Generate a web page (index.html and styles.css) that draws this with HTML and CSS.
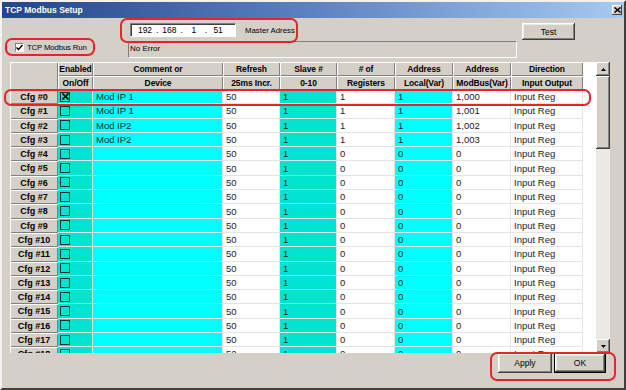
FILE: index.html
```html
<!DOCTYPE html>
<html>
<head>
  <title>TCP Modbus Setup</title>
  <link rel="stylesheet" href="styles.css">
</head>
<body>

<div class="window">
  <div class="titlebar">
    <span>TCP Modbus Setup</span>
    <span class="close"><svg width="7" height="6" viewBox="0 0 7 6"><path d="M0.5 0.5 L6.5 5.5 M6.5 0.5 L0.5 5.5" stroke="#000" stroke-width="1.5"/></svg></span>
  </div>

  <div class="top">
    <label class="run">
      <span class="check"><svg width="7" height="7" viewBox="0 0 7 7"><path d="M0.5 3.5 L2.5 5.5 L6.5 1" fill="none" stroke="#000" stroke-width="1.5"/></svg></span>
      TCP Modbus Run
    </label>
    <div class="ip-row">
      <div class="ip"><span>192</span>.<span>168</span>.<span>1</span>.<span>51</span></div>
      <span class="ip-label">Master Adress</span>
    </div>
    <div class="status">No Error</div>
    <button class="btn test">Test</button>
  </div>

  <div class="grid-frame">
    <div class="grid">
      <div class="corner"></div>
      <div class="hd">Enabled</div>
      <div class="hd">Comment or</div>
      <div class="hd">Refresh</div>
      <div class="hd">Slave #</div>
      <div class="hd"># of</div>
      <div class="hd">Address</div>
      <div class="hd">Address</div>
      <div class="hd">Direction</div>
      <div class="hd">On/Off</div>
      <div class="hd">Device</div>
      <div class="hd">25ms Incr.</div>
      <div class="hd">0-10</div>
      <div class="hd">Registers</div>
      <div class="hd">Local(Var)</div>
      <div class="hd">ModBus(Var)</div>
      <div class="hd">Input Output</div>

      <div class="rh">Cfg #0</div><div class="en"><i class="box"><svg width="7" height="7" viewBox="0 0 7 7"><path d="M0.5 0.5 L6.5 6.5 M6.5 0.5 L0.5 6.5" stroke="#000" stroke-width="1.6"/></svg></i></div><div class="cm">Mod IP 1</div><div class="w">50</div><div class="tl">1</div><div class="w">1</div><div class="cy">1</div><div class="w">1,000</div><div class="w">Input Reg</div>
      <div class="rh">Cfg #1</div><div class="en"><i class="box"></i></div><div class="cm">Mod IP 1</div><div class="w">50</div><div class="tl">1</div><div class="w">1</div><div class="cy">1</div><div class="w">1,001</div><div class="w">Input Reg</div>
      <div class="rh">Cfg #2</div><div class="en"><i class="box"></i></div><div class="cm">Mod IP2</div><div class="w">50</div><div class="tl">1</div><div class="w">1</div><div class="cy">1</div><div class="w">1,002</div><div class="w">Input Reg</div>
      <div class="rh">Cfg #3</div><div class="en"><i class="box"></i></div><div class="cm">Mod IP2</div><div class="w">50</div><div class="tl">1</div><div class="w">1</div><div class="cy">1</div><div class="w">1,003</div><div class="w">Input Reg</div>
      <div class="rh">Cfg #4</div><div class="en"><i class="box"></i></div><div class="cm"></div><div class="w">50</div><div class="tl">1</div><div class="w">0</div><div class="cy">0</div><div class="w">0</div><div class="w">Input Reg</div>
      <div class="rh">Cfg #5</div><div class="en"><i class="box"></i></div><div class="cm"></div><div class="w">50</div><div class="tl">1</div><div class="w">0</div><div class="cy">0</div><div class="w">0</div><div class="w">Input Reg</div>
      <div class="rh">Cfg #6</div><div class="en"><i class="box"></i></div><div class="cm"></div><div class="w">50</div><div class="tl">1</div><div class="w">0</div><div class="cy">0</div><div class="w">0</div><div class="w">Input Reg</div>
      <div class="rh">Cfg #7</div><div class="en"><i class="box"></i></div><div class="cm"></div><div class="w">50</div><div class="tl">1</div><div class="w">0</div><div class="cy">0</div><div class="w">0</div><div class="w">Input Reg</div>
      <div class="rh">Cfg #8</div><div class="en"><i class="box"></i></div><div class="cm"></div><div class="w">50</div><div class="tl">1</div><div class="w">0</div><div class="cy">0</div><div class="w">0</div><div class="w">Input Reg</div>
      <div class="rh">Cfg #9</div><div class="en"><i class="box"></i></div><div class="cm"></div><div class="w">50</div><div class="tl">1</div><div class="w">0</div><div class="cy">0</div><div class="w">0</div><div class="w">Input Reg</div>
      <div class="rh">Cfg #10</div><div class="en"><i class="box"></i></div><div class="cm"></div><div class="w">50</div><div class="tl">1</div><div class="w">0</div><div class="cy">0</div><div class="w">0</div><div class="w">Input Reg</div>
      <div class="rh">Cfg #11</div><div class="en"><i class="box"></i></div><div class="cm"></div><div class="w">50</div><div class="tl">1</div><div class="w">0</div><div class="cy">0</div><div class="w">0</div><div class="w">Input Reg</div>
      <div class="rh">Cfg #12</div><div class="en"><i class="box"></i></div><div class="cm"></div><div class="w">50</div><div class="tl">1</div><div class="w">0</div><div class="cy">0</div><div class="w">0</div><div class="w">Input Reg</div>
      <div class="rh">Cfg #13</div><div class="en"><i class="box"></i></div><div class="cm"></div><div class="w">50</div><div class="tl">1</div><div class="w">0</div><div class="cy">0</div><div class="w">0</div><div class="w">Input Reg</div>
      <div class="rh">Cfg #14</div><div class="en"><i class="box"></i></div><div class="cm"></div><div class="w">50</div><div class="tl">1</div><div class="w">0</div><div class="cy">0</div><div class="w">0</div><div class="w">Input Reg</div>
      <div class="rh">Cfg #15</div><div class="en"><i class="box"></i></div><div class="cm"></div><div class="w">50</div><div class="tl">1</div><div class="w">0</div><div class="cy">0</div><div class="w">0</div><div class="w">Input Reg</div>
      <div class="rh">Cfg #16</div><div class="en"><i class="box"></i></div><div class="cm"></div><div class="w">50</div><div class="tl">1</div><div class="w">0</div><div class="cy">0</div><div class="w">0</div><div class="w">Input Reg</div>
      <div class="rh">Cfg #17</div><div class="en"><i class="box"></i></div><div class="cm"></div><div class="w">50</div><div class="tl">1</div><div class="w">0</div><div class="cy">0</div><div class="w">0</div><div class="w">Input Reg</div>
      <div class="rh">Cfg #18</div><div class="en"><i class="box"></i></div><div class="cm"></div><div class="w">50</div><div class="tl">1</div><div class="w">0</div><div class="cy">0</div><div class="w">0</div><div class="w">Input Reg</div>
    </div>

    <div class="scrollbar">
      <div class="sb-btn"><svg width="5" height="3" viewBox="0 0 5 3"><path d="M2.5 0 L5 3 L0 3 Z" fill="#000"/></svg></div>
      <div class="sb-thumb"></div>
      <div class="sb-track"></div>
      <div class="sb-btn"><svg width="5" height="3" viewBox="0 0 5 3"><path d="M0 0 L5 0 L2.5 3 Z" fill="#000"/></svg></div>
    </div>
  </div>

  <div class="footer">
    <button class="btn">Apply</button>
    <button class="btn default">OK</button>
  </div>

  <!-- red annotation outlines -->
  <div class="mark mark-run"></div>
  <div class="mark mark-ip"></div>
  <div class="mark mark-row"></div>
  <div class="mark mark-btn"></div>
</div>

</body>
</html>
```

FILE: styles.css
```css
body {
  margin: 0;
  font-family: "Liberation Sans", Arial, sans-serif;
  font-size: 9px;
  color: #000;
  background: #d4d0c8;
}

.window {
  position: relative;
  width: 626px;
  height: 390px;
  box-sizing: border-box;
  border: 2px solid;
  border-color: #f4f2ee #404040 #404040 #f4f2ee;
  background: #d4d0c8;
  display: flex;
  flex-direction: column;
}

.titlebar {
  height: 16px;
  display: flex;
  align-items: center;
  justify-content: space-between;
  padding: 0 2px 0 3px;
  background: linear-gradient(to right, #234589, #5d82c0 50%, #a6caf0);
  color: #fff;
  font-weight: bold;
  font-size: 8.5px;
}

.close {
  width: 10px;
  height: 10px;
  display: flex;
  align-items: center;
  justify-content: center;
  background: #d4d0c8;
  box-shadow: inset -1px -1px #404040, inset 1px 1px #fff;
}

/* top controls */
.top {
  height: 44px;
  display: grid;
  grid-template-columns: 126px 389px 5px 53px;
  grid-template-rows: 23px 17px;
}

.run {
  grid-column: 1;
  grid-row: 2;
  display: flex;
  align-items: center;
  gap: 3px;
  margin: 1px 0 0 13px;
  height: 11px;
  font-size: 7.8px;
  letter-spacing: -0.15px;
}

.check {
  width: 9px;
  height: 9px;
  box-sizing: border-box;
  background: #fff;
  border: 1px solid;
  border-color: #808080 #fff #fff #808080;
  display: flex;
  align-items: center;
  justify-content: center;
}

.ip-row {
  grid-column: 2;
  grid-row: 1;
  display: flex;
  align-items: center;
  margin: 5px 0 0 2px;
  height: 14px;
}

.ip {
  width: 106px;
  height: 14px;
  box-sizing: border-box;
  background: #fff;
  border: 1px solid;
  border-color: #808080 #fff #fff #808080;
  box-shadow: inset 1px 1px #404040;
  display: flex;
  align-items: center;
  padding-left: 3px;
  font-size: 8.5px;
}

.ip span {
  width: 22px;
  text-align: center;
}

.ip-label {
  margin-left: 9px;
  font-size: 7.8px;
}

.status {
  grid-column: 2;
  grid-row: 2;
  border: 1px solid;
  border-color: #808080 #fff #fff #808080;
  padding: 1px 0 0 1px;
  font-size: 8px;
  line-height: 11px;
}

.btn {
  font-family: "Liberation Sans", Arial, sans-serif;
  font-size: 8.5px;
  color: #000;
  background: #d4d0c8;
  border: none;
  padding: 0;
  box-shadow: inset -1px -1px #404040, inset 1px 1px #fff, inset -2px -2px #808080, inset 2px 2px #eceae4;
}

.test {
  grid-column: 4;
  grid-row: 1;
  margin-top: 5px;
  height: 17px;
}

/* table */
.grid-frame {
  display: flex;
  margin-left: 8px;
  width: 600px;
  height: 291px;
  overflow: hidden;
}

.grid {
  flex: 1;
  display: grid;
  grid-template-columns: 48px 35px 130px 57px 57px 58px 58px 58px 72px;
  grid-template-rows: 14px 14px;
  grid-auto-rows: 14.3px;
  align-content: start;
  background: #fff;
  overflow: hidden;
}

.corner {
  grid-row: span 2;
  background: #d4d0c8;
  box-shadow: inset 1px 1px #fff, inset -1px -1px #808080;
}

.hd, .rh {
  background: #d4d0c8;
  box-shadow: inset 1px 1px #fff, inset -1px -1px #808080;
  font-weight: bold;
  text-align: center;
  line-height: 14px;
  white-space: nowrap;
  overflow: hidden;
}

.hd {
  font-size: 8.5px;
  letter-spacing: -0.1px;
}

.en, .cm, .w, .tl, .cy {
  display: flex;
  align-items: center;
  padding-left: 3px;
  box-sizing: border-box;
  border-right: 1px solid #e4e4e4;
  border-bottom: 1px solid #e4e4e4;
  white-space: nowrap;
  overflow: hidden;
  color: #1c1c1c;
  font-size: 9.5px;
}

.en, .tl {
  background: #00e4d0;
}

.cm, .cy {
  background: #00ffff;
}

.w {
  background: #fff;
}

.en {
  padding-left: 2px;
}

.box {
  width: 10px;
  height: 10px;
  box-sizing: border-box;
  border: 1px solid #0b3b36;
  display: flex;
  align-items: center;
  justify-content: center;
}

/* scrollbar */
.scrollbar {
  width: 14px;
  display: flex;
  flex-direction: column;
}

.sb-btn {
  height: 14px;
  display: flex;
  align-items: center;
  justify-content: center;
  background: #d4d0c8;
  box-shadow: inset -1px -1px #404040, inset 1px 1px #fff, inset -2px -2px #808080;
}

.sb-thumb {
  height: 73px;
  background: #d4d0c8;
  box-shadow: inset -1px -1px #404040, inset 1px 1px #fff, inset -2px -2px #808080;
}

.sb-track {
  flex: 1;
  background: #ebe9e4;
}

/* bottom buttons */
.footer {
  display: flex;
  justify-content: flex-end;
  gap: 2px;
  padding-right: 18px;
}

.footer .btn {
  height: 20px;
  width: 54px;
}

.footer .default {
  width: 52px;
  border: 1px solid #000;
}

/* annotations */
.mark {
  position: absolute;
  box-sizing: border-box;
  border: 2px solid #e3262b;
  border-radius: 7px;
}

.mark-run {
  left: 3px;
  top: 36px;
  width: 90px;
  height: 18px;
}

.mark-ip {
  left: 118px;
  top: 16px;
  width: 178px;
  height: 25px;
}

.mark-row {
  left: 2px;
  top: 87px;
  width: 587px;
  height: 17px;
}

.mark-btn {
  left: 488px;
  top: 350px;
  width: 126px;
  height: 29px;
}
```
